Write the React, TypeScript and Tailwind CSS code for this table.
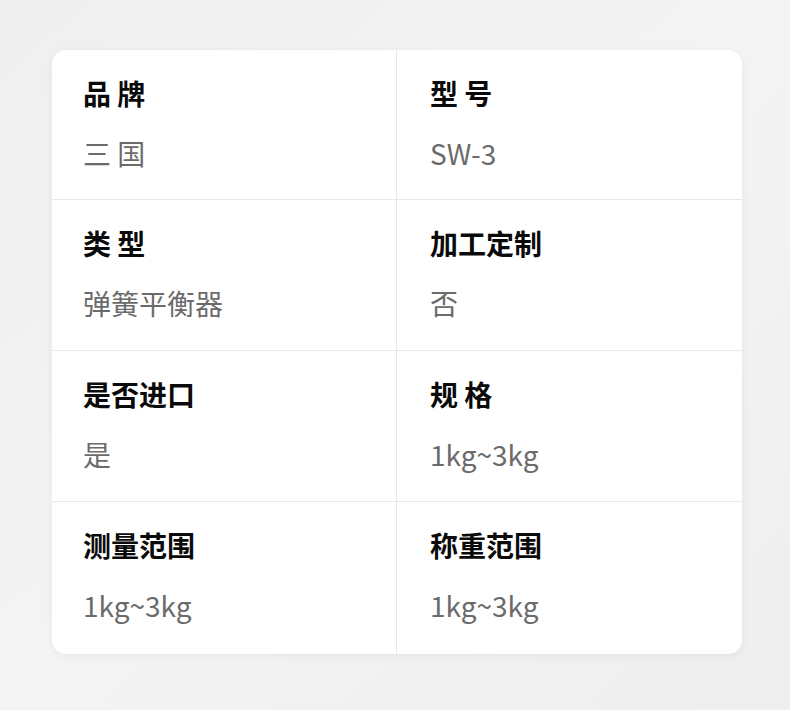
import React from "react";

const items: { label: string; value: string }[] = [
  { label: "品 牌", value: "三 国" },
  { label: "型 号", value: "SW-3" },
  { label: "类 型", value: "弹簧平衡器" },
  { label: "加工定制", value: "否" },
  { label: "是否进口", value: "是" },
  { label: "规 格", value: "1kg~3kg" },
  { label: "测量范围", value: "1kg~3kg" },
  { label: "称重范围", value: "1kg~3kg" },
];

export default function App() {
  return (
    <div
      className="w-[790px] h-[710px] bg-gradient-to-br from-[#efefef] via-[#f4f4f4] to-[#eeeeee] pt-[50px] pl-[52px]"
      style={{ fontFamily: '"Noto Sans CJK SC", "Noto Sans", sans-serif' }}
    >
      <div className="w-[690px] h-[604px] bg-white rounded-[14px] shadow-[0_2px_8px_rgba(0,0,0,0.06)] grid grid-cols-[345px_345px] grid-rows-[150px_151px_151px_152px] overflow-hidden">
        {items.map((it, i) => {
          const col = i % 2;
          const row = Math.floor(i / 2);
          return (
            <div
              key={i}
              className={
                "flex flex-col pt-[22px] " +
                (col === 0 ? "pl-[31px] border-r border-[#e8e8e8] " : "pl-[33px] ") +
                (row < 3 ? "border-b border-[#e8e8e8]" : "")
              }
            >
              <div className="text-[28px] leading-[42px] font-bold text-[#0a0a0a]">{it.label}</div>
              <div className="mt-[18px] text-[28px] leading-[42px] text-[#6b6b6b]">{it.value}</div>
            </div>
          );
        })}
      </div>
    </div>
  );
}
